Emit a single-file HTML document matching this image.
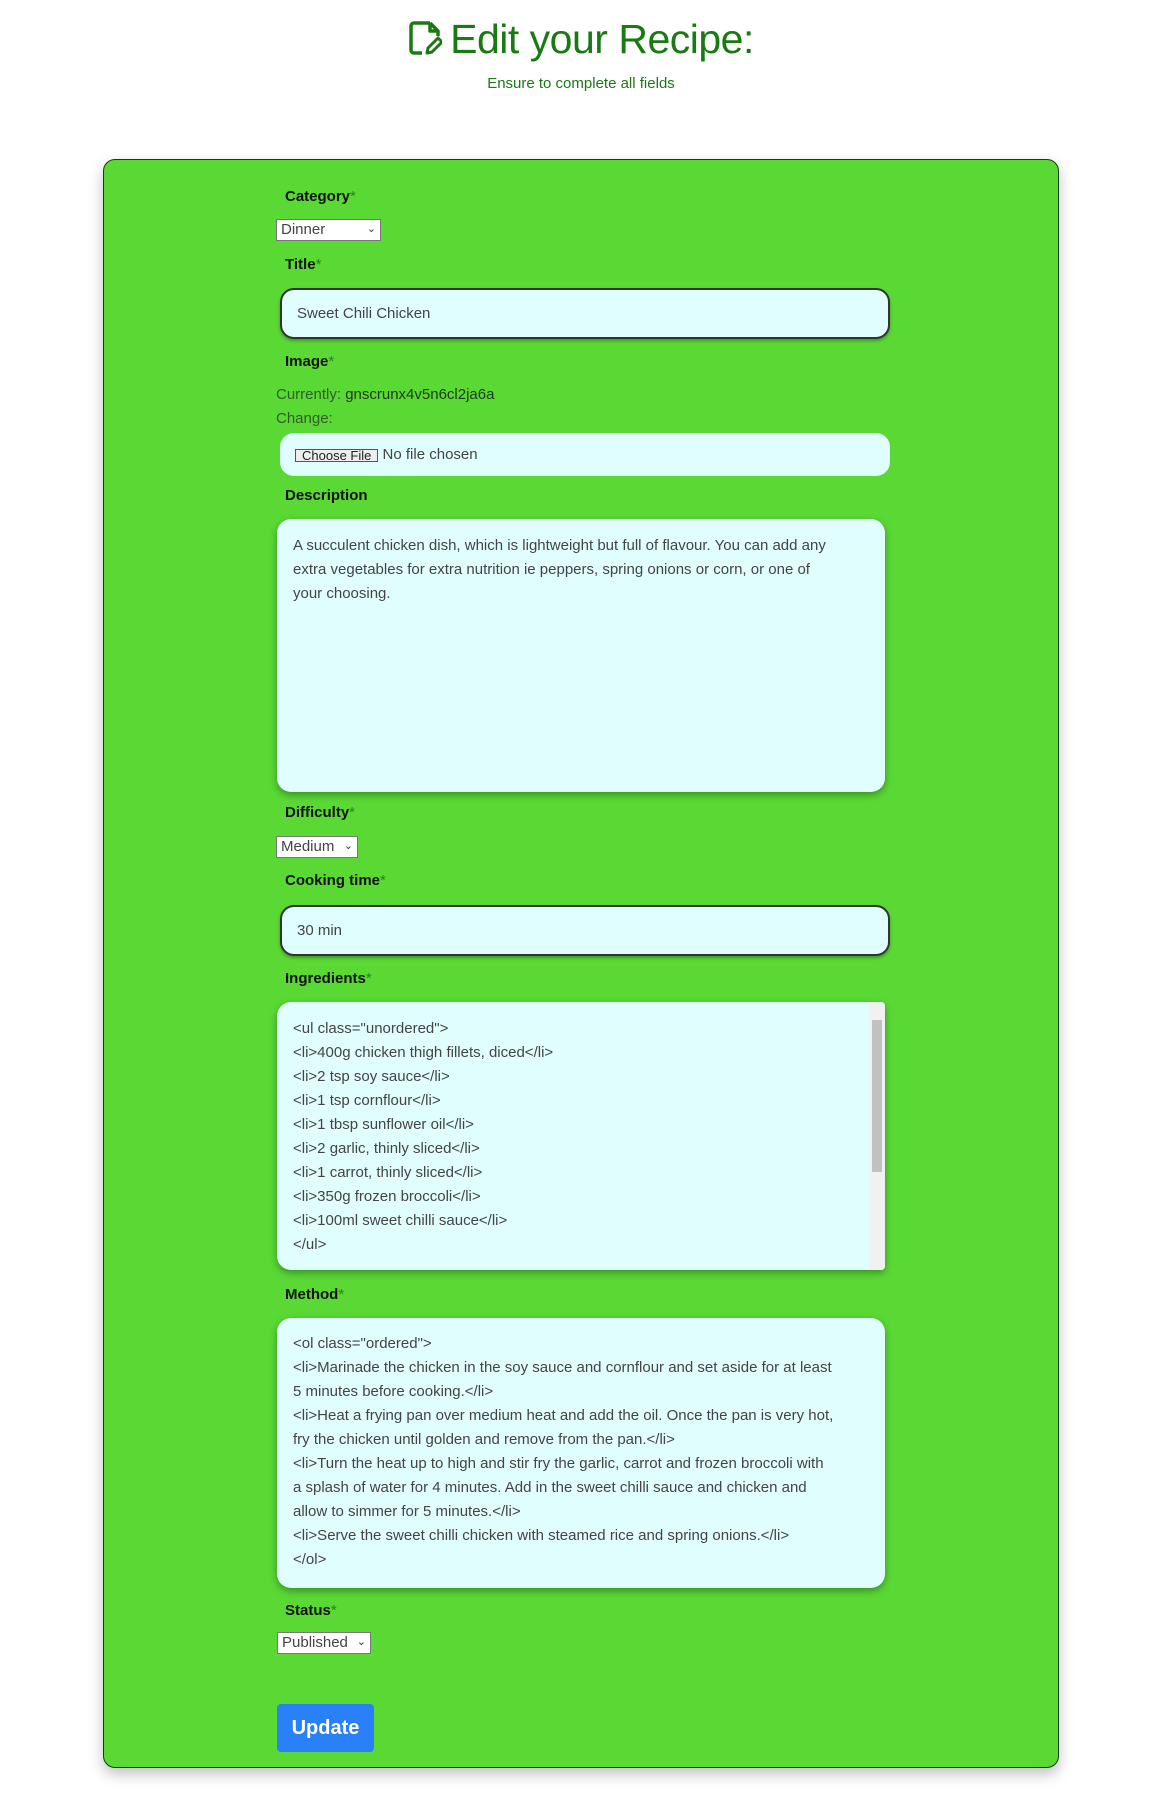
<!DOCTYPE html>
<html><head><meta charset="utf-8">
<style>
*{box-sizing:border-box;margin:0;padding:0}
body{width:1162px;height:1799px;background:#fff;font-family:"Liberation Sans",sans-serif;position:relative;overflow:hidden}
.a{position:absolute}
h1{position:absolute;left:0;width:1162px;top:16px;text-align:center;font-weight:normal;font-size:41px;color:#1a7a12;letter-spacing:-0.5px}
.sub{left:0;width:1162px;top:75px;text-align:center;font-size:15px;color:#1a7a12}
.card{left:103px;top:159px;width:956px;height:1609px;background:#5ad935;border:1px solid #1a3a14;border-radius:12px;box-shadow:0 6px 14px rgba(0,0,0,.25)}
.lab{left:285px;font-size:15px;font-weight:bold;color:#111}
.lab span{color:#2f7d25;font-weight:normal}
.sel{background:#fff;border:1px solid #777;font-size:15px;color:#444;padding:1px 4px;height:22px;line-height:18px}
.sel i{position:absolute;right:4px;top:0;font-style:normal;font-size:11px;color:#333}
.inp{left:280px;width:610px;background:#e0fefe;border:2px solid #333;border-radius:14px;font-size:15px;color:#444;padding-left:15px;box-shadow:0 2px 3px rgba(0,0,0,.3)}
.ta{left:277px;width:608px;background:#e0fefe;border-radius:14px;font-size:15px;line-height:24px;color:#444;padding:10px 16px;box-shadow:0 3px 8px rgba(0,0,0,.35);white-space:nowrap;overflow:hidden}
.sm{left:276px;font-size:15px;color:#2f5d28}
</style></head><body>
<h1><svg width="34" height="36" viewBox="0 0 34 36" style="vertical-align:-3px;margin-right:8px"><path d="M22 3H6a3 3 0 0 0-3 3v24a3 3 0 0 0 3 3h8M22 3l8 8v5M22 3v8h8" fill="none" stroke="#1a7a12" stroke-width="3.5" stroke-linejoin="round"/><path d="M19 33l1-5 10-10 4 4-10 10z" fill="none" stroke="#1a7a12" stroke-width="3" stroke-linejoin="round"/></svg>Edit your Recipe:</h1>
<div class="a sub">Ensure to complete all fields</div>
<div class="a card"></div>

<div class="a lab" style="top:188px">Category<span>*</span></div>
<div class="a sel" style="left:276px;top:219px;width:105px">Dinner<i>&#8964;</i></div>
<div class="a lab" style="top:256px">Title<span>*</span></div>
<div class="a inp" style="top:288px;height:51px;line-height:47px">Sweet Chili Chicken</div>
<div class="a lab" style="top:353px">Image<span>*</span></div>
<div class="a sm" style="top:386px">Currently: <span style="color:#1d3a18">gnscrunx4v5n6cl2ja6a</span></div>
<div class="a sm" style="top:410px">Change:</div>
<div class="a inp" style="top:433px;height:43px;border:none;line-height:43px;padding-left:15px;box-shadow:none"><span style="display:inline-block;border:1px solid #555;background:#eee;font-size:13px;line-height:11px;height:13px;padding:0 6px;vertical-align:middle;overflow:hidden;color:#222">Choose File</span> No file chosen</div>
<div class="a lab" style="top:487px">Description</div>
<div class="a ta" style="top:519px;height:273px;padding-top:15px">A succulent chicken dish, which is lightweight but full of flavour. You can add any<br>extra vegetables for extra nutrition ie peppers, spring onions or corn, or one of<br>your choosing.</div>
<div class="a lab" style="top:804px">Difficulty<span>*</span></div>
<div class="a sel" style="left:276px;top:836px;width:82px">Medium<i>&#8964;</i></div>
<div class="a lab" style="top:872px">Cooking time<span>*</span></div>
<div class="a inp" style="top:905px;height:51px;line-height:47px">30 min</div>
<div class="a lab" style="top:970px">Ingredients<span>*</span></div>
<div class="a ta" style="top:1002px;height:268px;padding-top:15px;border-radius:14px 4px 4px 14px">&lt;ul class="unordered"&gt;<br>&lt;li&gt;400g chicken thigh fillets, diced&lt;/li&gt;<br>&lt;li&gt;2 tsp soy sauce&lt;/li&gt;<br>&lt;li&gt;1 tsp cornflour&lt;/li&gt;<br>&lt;li&gt;1 tbsp sunflower oil&lt;/li&gt;<br>&lt;li&gt;2 garlic, thinly sliced&lt;/li&gt;<br>&lt;li&gt;1 carrot, thinly sliced&lt;/li&gt;<br>&lt;li&gt;350g frozen broccoli&lt;/li&gt;<br>&lt;li&gt;100ml sweet chilli sauce&lt;/li&gt;<br>&lt;/ul&gt;
<div class="a" style="right:0;top:0;width:16px;height:268px;background:#f1f1f1"></div>
<div class="a" style="right:3px;top:18px;width:10px;height:152px;background:#c1c1c1"></div>
</div>
<div class="a lab" style="top:1286px">Method<span>*</span></div>
<div class="a ta" style="top:1318px;height:270px;padding-top:14px">&lt;ol class="ordered"&gt;<br>&lt;li&gt;Marinade the chicken in the soy sauce and cornflour and set aside for at least<br>5 minutes before cooking.&lt;/li&gt;<br>&lt;li&gt;Heat a frying pan over medium heat and add the oil. Once the pan is very hot,<br>fry the chicken until golden and remove from the pan.&lt;/li&gt;<br>&lt;li&gt;Turn the heat up to high and stir fry the garlic, carrot and frozen broccoli with<br>a splash of water for 4 minutes. Add in the sweet chilli sauce and chicken and<br>allow to simmer for 5 minutes.&lt;/li&gt;<br>&lt;li&gt;Serve the sweet chilli chicken with steamed rice and spring onions.&lt;/li&gt;<br>&lt;/ol&gt;</div>
<div class="a lab" style="top:1602px">Status<span>*</span></div>
<div class="a sel" style="left:277px;top:1632px;width:94px">Published<i>&#8964;</i></div>
<div class="a" style="left:277px;top:1704px;width:97px;height:48px;background:#2a80f7;border-radius:4px;color:#fff;font-weight:bold;font-size:20px;text-align:center;line-height:48px">Update</div>
</body></html>
